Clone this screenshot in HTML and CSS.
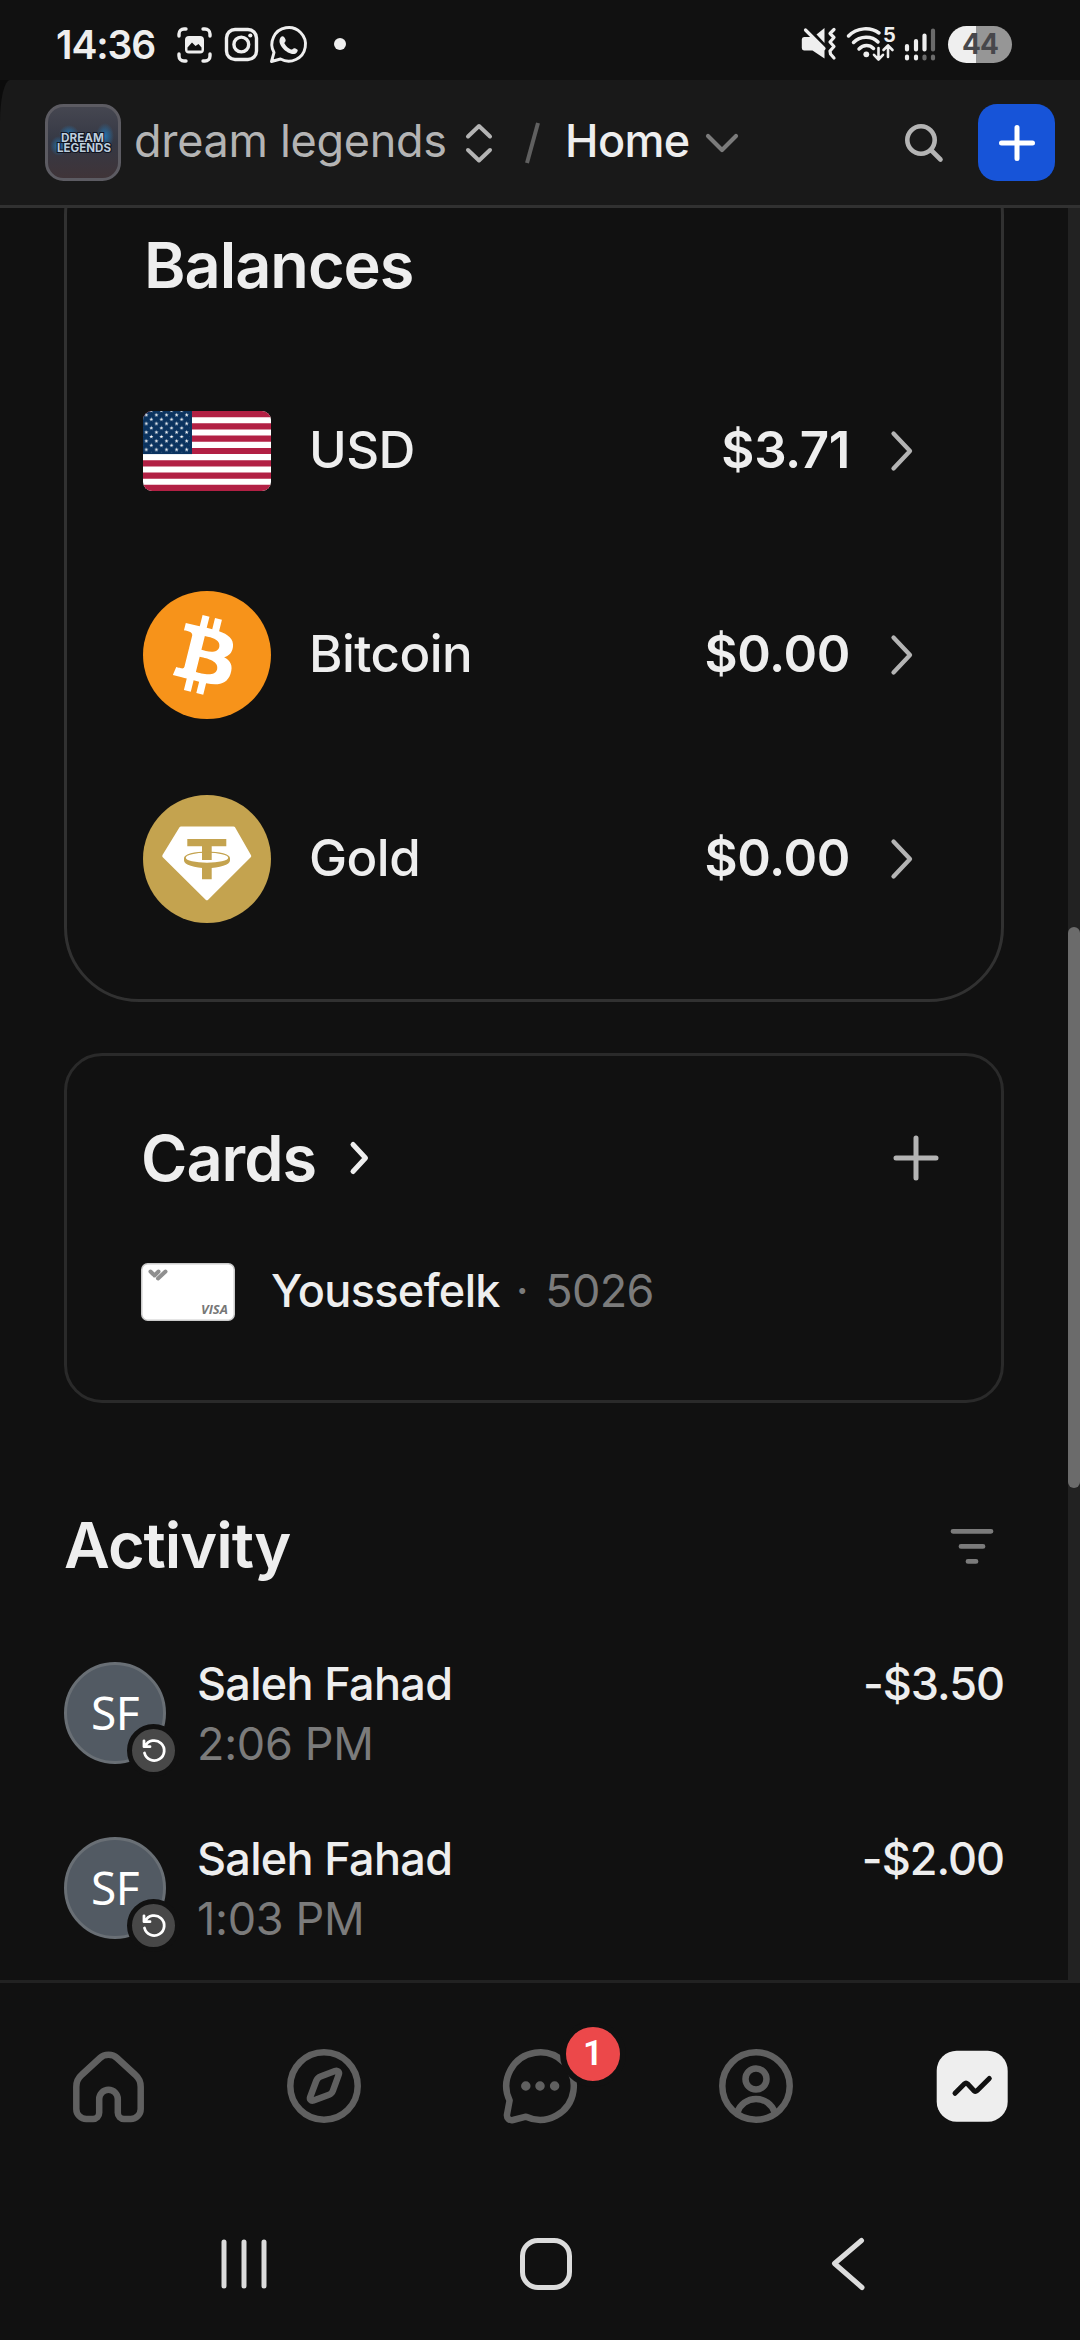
FILE: index.html
```html
<!DOCTYPE html>
<html lang="en">
<head>
<meta charset="utf-8">
<title>Home</title>
<link rel="stylesheet" href="styles.css">
</head>
<body>
<div class="phone">
  <div class="statusbar">
    <span class="clock">14:36</span>
    <svg class="notifs" width="180" height="44" viewBox="174 22 180 44" fill="none" stroke="#efefef" stroke-width="3.4" stroke-linecap="round">
      <path d="M179 36V34A5 5 0 0 1 184 29H186M203 29H205A5 5 0 0 1 210 34V36M210 54V56A5 5 0 0 1 205 61H203M186 61H184A5 5 0 0 1 179 56V54"/>
      <rect x="185" y="36" width="19" height="17.500" rx="4" fill="#efefef" stroke="none"/>
      <path d="M187.500 50.500V47.500L192 42.500L195.500 46L198.500 44L201.500 47.500V50.500Z" fill="#111" stroke="none"/>
      <rect x="226.500" y="29.500" width="30" height="30" rx="8.500"/>
      <circle cx="241.300" cy="44.500" r="7.400"/>
      <circle cx="250.300" cy="35.500" r="2.100" fill="#efefef" stroke="none"/>
      <path d="M274 52.500A16.800 16.800 0 1 1 280.500 59L271.500 61.500Z" stroke-width="2.900" stroke-linejoin="round"/>
      <path d="M280.500 37.500C282.500 35 284.500 36.500 285.500 39.500C286.300 41.500 284 42.500 284.500 43.500C286 46.500 288.500 48.500 291 49.500C292.500 50 293 47.500 295 48.300C298 49.500 298.500 50.500 296.800 52.500C294 56 287 53 283 48.500C279.500 44.500 278.500 40.500 280.500 37.500Z" fill="#efefef" stroke="none"/>
      <circle cx="340" cy="44" r="6" fill="#efefef" stroke="none"/>
    </svg>
    <svg class="sysicons" width="140" height="40" viewBox="800 24 140 40" fill="none" stroke="#efefef" stroke-linecap="round" stroke-linejoin="round">
      <path d="M804 37H812L824.500 49V58.500L812.500 50.500H804A2.500 2.500 0 0 1 801.800 48V39.500A2.500 2.500 0 0 1 804 37Z" fill="#efefef" stroke="none"/>
      <path d="M824.500 28V43L816.500 34.500Z" fill="#efefef" stroke="none"/>
      <path d="M805.500 30L824 48.500" stroke-width="3.200"/>
      <path d="M834 29.500L830 33.500L834 37.500L830 42L834 46.500L830 51L830.500 54L834 58" stroke-width="3.200"/>
      <path d="M848.500 36C857 27 871 27 879 33M853.500 42.500C860 35.500 872 35.500 878 42M859 49C863.500 44.500 869.500 44.500 873.500 48.500" stroke-width="3.500"/>
      <circle cx="866.300" cy="54.300" r="2.900" fill="#efefef" stroke="none"/>
      <path d="M878.500 48V59M874 54.800L878.500 59.500L883 54.800M888 57V46M883.500 50L888 45.300L892.500 50" stroke-width="2.600"/>
      <text class="wifi-gen" x="883" y="41.500">5</text>
      <path d="M907 46V49.500M916 41V49.500M924.500 35.500V49.500M907 56.500V58.500M916 56.500V58.500" stroke-width="4.200"/>
      <path d="M933 30.500V49.500M924.500 56.500V58.500M933 56.500V58.500" stroke="#6b6b6b" stroke-width="4.200"/>
    </svg>
    <span class="battery">44</span>
  </div>

  <div class="appbar-wrap">
    <header class="appbar">
      <svg class="brand-logo" width="76" height="77" viewBox="0 0 76 77">
        <defs>
          <linearGradient id="lg" x1="0" y1="0" x2="0" y2="1"><stop offset="0" stop-color="#464751"/><stop offset=".5" stop-color="#353844"/><stop offset="1" stop-color="#403438"/></linearGradient>
          <radialGradient id="glow"><stop offset="0" stop-color="#1f7fc4" stop-opacity=".8"/><stop offset="1" stop-color="#1f7fc4" stop-opacity="0"/></radialGradient>
        </defs>
        <rect x="1.500" y="1.500" width="73" height="74" rx="17" fill="url(#lg)" stroke="#5c5b62" stroke-width="3"/>
        <ellipse cx="60" cy="32" rx="9" ry="13" fill="url(#glow)"/>
        <ellipse cx="24" cy="30" rx="10" ry="9" fill="url(#glow)"/>
        <ellipse cx="14" cy="42" rx="9" ry="10" fill="url(#glow)"/>
        <text class="logo-word" x="16" y="38" textLength="43" lengthAdjust="spacingAndGlyphs">DREAM</text>
        <text class="logo-word" x="12" y="47.500" textLength="54" lengthAdjust="spacingAndGlyphs">LEGENDS</text>
      </svg>
      <span class="brand-name">dream legends</span>
      <svg class="updown" width="28" height="42" viewBox="0 0 28 42" fill="none" stroke="#b4b4b4" stroke-width="4" stroke-linecap="round" stroke-linejoin="round"><path d="M3 14.500L14 4L25 14.500M3 28L14 38.500L25 28"/></svg>
      <svg class="slash" width="18" height="44" viewBox="0 0 18 44" stroke="#606060" stroke-width="4"><path d="M3 42L14 2"/></svg>
      <span class="crumb">Home</span>
      <svg class="down" width="36" height="24" viewBox="0 0 36 24" fill="none" stroke="#7b7b7b" stroke-width="4.200" stroke-linecap="round" stroke-linejoin="round"><path d="M4 5L18 19L32 5"/></svg>
      <svg class="search" width="42" height="42" viewBox="0 0 42 42" fill="none" stroke="#b4b4b4" stroke-width="4.600" stroke-linecap="round"><circle cx="18" cy="18" r="13.700"/><path d="M28.500 28.500L37.500 37.500"/></svg>
      <button class="create" aria-label="Create"><svg width="44" height="44" viewBox="0 0 44 44" stroke="#fff" stroke-width="5" stroke-linecap="round"><path d="M22 6.500V37.500M6.500 22H37.500"/></svg></button>
    </header>
  </div>

  <div class="viewport">
    <main class="content">
      <section class="card balances">
        <h2>Balances</h2>
        <div class="balance">
          <svg class="flag" width="128" height="80" viewBox="0 0 128 80">
            <defs>
              <pattern id="stars" x=".8" y="1.900" width="10.100" height="8.670" patternUnits="userSpaceOnUse">
                <path id="s" fill="#fff" d="M2.500 0L3 1.400H4.500L3.300 2.300L3.800 3.800L2.500 2.900L1.200 3.800L1.700 2.300L.5 1.400H2Z"/>
                <use href="#s" x="5.050" y="4.330"/>
              </pattern>
            </defs>
            <rect width="128" height="80" fill="#fff"/>
            <path stroke="#b22044" stroke-width="6.150" d="M0 3.080H128M0 15.380H128M0 27.690H128M0 40H128M0 52.310H128M0 64.620H128M0 76.920H128"/>
            <rect width="49" height="43.080" fill="#0b335f"/>
            <rect width="47" height="41.300" fill="url(#stars)"/>
          </svg>
          <span class="asset">USD</span><span class="amount">$3.71</span>
          <svg class="go" width="48" height="48" viewBox="0 0 48 48"><path d="M15.500 6.500L32 24L15.500 41.500"/></svg>
        </div>
        <div class="balance">
          <svg width="128" height="128" viewBox="0 0 32 32"><circle cx="16" cy="16" r="16" fill="#f7931a"/><path transform="translate(-.7 0)" fill="#fff" d="M23.189 14.020c.314-2.096-1.283-3.223-3.465-3.975l.708-2.840-1.728-.430-.690 2.765c-.454-.114-.920-.220-1.385-.326l.695-2.783L15.596 6l-.708 2.839c-.376-.086-.746-.170-1.104-.260l.002-.009-2.384-.595-.460 1.846s1.283.294 1.256.312c.7.175.826.638.805 1.006l-.806 3.235c.048.012.110.030.180.057l-.183-.045-1.130 4.532c-.086.212-.303.531-.793.410.018.025-1.256-.313-1.256-.313l-.858 1.978 2.250.561c.418.105.828.215 1.231.318l-.715 2.872 1.727.430.708-2.840c.472.127.930.245 1.378.357l-.706 2.828 1.728.430.715-2.866c2.948.558 5.164.333 6.097-2.333.752-2.146-.037-3.385-1.588-4.192 1.130-.260 1.980-1.003 2.207-2.538zm-3.950 5.538c-.533 2.147-4.148.986-5.320.695l.950-3.805c1.172.293 4.929.872 4.370 3.110zm.535-5.569c-.487 1.953-3.495.960-4.470.717l.860-3.450c.975.243 4.118.696 3.610 2.733z"/></svg>
          <span class="asset">Bitcoin</span><span class="amount">$0.00</span>
          <svg class="go" width="48" height="48" viewBox="0 0 48 48"><path d="M15.500 6.500L32 24L15.500 41.500"/></svg>
        </div>
        <div class="balance">
          <svg width="128" height="128" viewBox="0 0 128 128"><circle cx="64" cy="64" r="64" fill="#c4a34f"/><path d="M38 33.200H90.500L106.500 61L63.900 103.500L21 61Z" fill="#fff" stroke="#fff" stroke-width="3.500" stroke-linejoin="round"/><path d="M44.300 44H83.300V51.200H68.700V65H59V51.200H44.300ZM59 71H68.700V84.300H59Z" fill="#c4a34f"/><path fill-rule="evenodd" d="M41 63A23 6.600 0 0 1 87 63V65.500A23 7.600 0 0 1 41 65.500ZM42.800 62.800A21.200 5 0 0 0 85.200 62.800A21.200 5 0 0 0 42.800 62.800Z" fill="#c4a34f"/></svg>
          <span class="asset">Gold</span><span class="amount">$0.00</span>
          <svg class="go" width="48" height="48" viewBox="0 0 48 48"><path d="M15.500 6.500L32 24L15.500 41.500"/></svg>
        </div>
      </section>

      <section class="card cards">
        <div class="cards-head">
          <h2>Cards</h2>
          <svg class="cards-go" width="24" height="40" viewBox="0 0 24 40"><path d="M5 6.500L17.500 20L5 33.500"/></svg>
          <svg class="add" width="48" height="48" viewBox="0 0 48 48"><path d="M24 4V44M4 24H44"/></svg>
        </div>
        <div class="card-row">
          <svg width="94" height="58" viewBox="0 0 94 58"><rect x=".75" y=".75" width="92.500" height="56.500" rx="6" fill="#fff" stroke="#ccc" stroke-width="1.500"/><path d="M9.500 8.500L12 11M17.500 8.500L13.500 12.500M24.500 8.500L17 15.500" stroke="#8f8f8f" stroke-width="4" stroke-linecap="round"/><text class="visa" x="60" y="51" textLength="27" lengthAdjust="spacingAndGlyphs">VISA</text></svg>
          <span class="card-name">Youssefelk</span><span class="card-dot">·</span><span class="card-last4">5026</span>
        </div>
      </section>

      <section class="activity">
        <div class="activity-head">
          <h2>Activity</h2>
          <svg width="48" height="40" viewBox="0 0 48 40" stroke="#7b7b7b" stroke-width="4.800" stroke-linecap="round"><path d="M5 6.300H43M13 21.400H35M20 36.400H28"/></svg>
        </div>
        <div class="entry">
          <div class="avatar">SF<span class="avatar-badge"><svg width="28" height="28" viewBox="0 0 28 28"><path d="M4.500 16A10 10 0 1 0 5.200 9.200M4 3.800V9.700H10"/></svg></span></div>
          <div class="who"><span class="name">Saleh Fahad</span><span class="time">2:06 PM</span></div>
          <span class="delta">-$3.50</span>
        </div>
        <div class="entry">
          <div class="avatar">SF<span class="avatar-badge"><svg width="28" height="28" viewBox="0 0 28 28"><path d="M4.500 16A10 10 0 1 0 5.200 9.200M4 3.800V9.700H10"/></svg></span></div>
          <div class="who"><span class="name">Saleh Fahad</span><span class="time">1:03 PM</span></div>
          <span class="delta">-$2.00</span>
        </div>
      </section>
    </main>
    <div class="scrollbar"><div class="thumb"></div></div>
  </div>

  <nav class="tabs">
    <a class="tab"><svg width="88" height="88" viewBox="0 0 88 88"><path d="M12.300 45C12.300 40 14 36 17.500 33L36 16C40.500 11.800 48.500 11.800 53 16L71.500 33C75 36 76.700 40 76.700 45V67A10 10 0 0 1 66.700 77H60A6.200 6.200 0 0 1 53.800 70.800V57A9.300 9.300 0 0 0 35.200 57V70.800A6.200 6.200 0 0 1 29 77H22.300A10 10 0 0 1 12.300 67Z"/></svg></a>
    <a class="tab"><svg width="88" height="88" viewBox="-44 -44 88 88"><circle r="33.700"/><path d="M-3.500 -9.500L11 -15C13.500 -16 15.700 -14 14.800 -11.500L9 4.500C8.300 6.500 7 8 5 8.700L-10.500 14.500C-13 15.400 -14.700 13.300 -13.800 11L-7.800 -5C-7 -7.200 -5.700 -8.700 -3.500 -9.500Z"/></svg></a>
    <a class="tab"><span class="chat"><svg width="88" height="88" viewBox="-44 -44 88 88"><path d="M-30.400 14.500L-33 28.500C-33.600 32.500 -30.500 34.700 -27 34L-14 30.700A33.700 33.700 0 1 0 -30.400 14.500Z"/><path class="dots" d="M-14.200 0H-14.190M0 0H.01M14.600 0H14.610"/></svg><span class="badge">1</span></span></a>
    <a class="tab"><svg width="88" height="88" viewBox="-44 -44 88 88"><circle r="33.700"/><circle cy="-7" r="10.500"/><path d="M-18.700 26.500A19.700 19.700 0 0 1 18.700 26.500"/></svg></a>
    <a class="tab"><svg width="88" height="88" viewBox="-44 -44 88 88"><rect class="tile" x="-35.300" y="-35.300" width="71" height="71" rx="20"/><path class="trend" d="M-17 7.300L-7.500 -2.200Q-6 -3.700 -4.500 -2.200L2 4.800Q3.500 6 5 4.700L17.300 -7.500"/></svg></a>
  </nav>

  <div class="sysnav">
    <svg width="60" height="60" viewBox="-30 -30 60 60"><path d="M-20 -22V22M0 -22V22M20 -22V22"/></svg>
    <svg width="60" height="60" viewBox="-30 -30 60 60"><rect x="-23.500" y="-23.500" width="47" height="47" rx="15.500"/></svg>
    <svg width="60" height="60" viewBox="-30 -30 60 60"><path d="M13.500 -23.500L-13.500 -.5L14 23.500"/></svg>
  </div>
</div>
</body>
</html>
```
FILE: styles.css
```css
* { box-sizing: border-box; }
body {
  margin: 0;
  background: #111;
  color: #eee;
  font-family: Inter, "Liberation Sans", sans-serif;
}
svg { display: block; flex: none; }
.phone {
  width: 1080px;
  height: 2340px;
  display: flex;
  flex-direction: column;
  overflow: hidden;
  background: #111;
}

/* Android status bar */
.statusbar {
  height: 80px;
  flex: none;
  display: flex;
  align-items: center;
  padding: 8px 68px 0 56px;
}
.clock {
  width: 118px;
  font-size: 39px;
  font-weight: 600;
  letter-spacing: -1.1px;
  white-space: nowrap;
}
.sysicons { margin-left: auto; }
.wifi-gen { font: 700 20px Inter, sans-serif; fill: #efefef; stroke: none; }
.battery {
  width: 64px;
  height: 37px;
  margin-left: 8px;
  border-radius: 19px;
  background: linear-gradient(90deg, #efefef 43%, #969696 43%);
  color: #47474b;
  font-size: 28px;
  font-weight: 700;
  line-height: 36px;
  text-align: center;
  letter-spacing: -1px;
}

/* App bar */
.appbar-wrap { flex: none; background: #0b0b0b; }
.appbar {
  height: 128px;
  display: flex;
  align-items: center;
  padding: 0 25px 0 45px;
  background: #191919;
  border-bottom: 3px solid #313131;
  border-top-left-radius: 10px 42px;
}
.logo-word {
  font: 700 11.500px Inter, sans-serif;
  fill: #bccddd;
  stroke: #10131f;
  stroke-width: 2px;
  paint-order: stroke;
}
.brand-name, .crumb { padding-bottom: 3px; font-size: 45px; font-weight: 500; line-height: 60px; white-space: nowrap; }
.brand-name { width: 331px; margin-left: 13px; color: #b4b4b4; font-weight: 400; letter-spacing: -.3px; }
.slash { margin-left: 31px; }
.crumb { margin-left: 23px; width: 139px; letter-spacing: -.6px; }
.search { margin-left: auto; }
.create {
  width: 77px;
  height: 77px;
  margin-left: 33px;
  padding: 0;
  border: 0;
  border-radius: 19px;
  background: #1754d8;
  display: flex;
  align-items: center;
  justify-content: center;
}

/* Scrolling area */
.viewport { height: 1772px; flex: none; display: flex; overflow: hidden; }
.content { width: 1068px; height: 1772px; padding: 0 64px; overflow: hidden; }
.scrollbar { width: 12px; height: 1775px; padding-top: 719px; background: #222; }
.thumb { height: 561px; border-radius: 6px; background: #6b6b6b; }
h2 { margin: 0; font-size: 63px; font-weight: 600; line-height: 76px; letter-spacing: -1px; }
.card { border: 3px solid #313131; }

.balances { height: 862px; margin-top: -68px; padding: 84px 75px 0 76px; border-radius: 75px; }
.balances h2 { margin: 0 0 46px 1px; }
.balance { height: 204px; display: flex; align-items: center; }
.flag { border-radius: 9px; }
.asset { margin-left: 38px; padding-bottom: 3px; font-size: 51px; font-weight: 500; letter-spacing: -.55px; }
.amount { margin-left: auto; margin-right: 28px; padding-bottom: 3px; font-size: 51px; font-weight: 600; letter-spacing: -.4px; }
.go path { fill: none; stroke: #b4b4b4; stroke-width: 4.300px; stroke-linecap: round; stroke-linejoin: round; }

.cards { height: 350px; margin-top: 51px; padding: 60px 61px 0 74px; border-color: #2a2a2a; border-radius: 38px; }
.cards-head { height: 84px; display: flex; align-items: center; }
.cards-go { margin-left: 32px; }
.cards-go path { fill: none; stroke: #eee; stroke-width: 5px; stroke-linecap: round; stroke-linejoin: round; }
.add { margin-left: auto; }
.add path { stroke: #b4b4b4; stroke-width: 5px; stroke-linecap: round; }
.card-row { height: 58px; margin-top: 63px; display: flex; align-items: center; font-size: 45px; letter-spacing: -.65px; }
.card-row span { padding-bottom: 3px; }
.card-name { margin-left: 36px; font-weight: 500; }
.card-dot { margin: 0 17px 0 16px; color: #7b7b7b; }
.card-last4 { color: #7b7b7b; }
.visa { font: italic 700 13px "Open Sans", sans-serif; fill: #777; letter-spacing: 0; }

.activity { margin-top: 100px; }
.activity-head { height: 84px; margin-bottom: 66px; padding-right: 8px; display: flex; align-items: center; justify-content: space-between; }
.entry { height: 120px; margin-bottom: 55px; display: flex; align-items: center; font-size: 45px; line-height: 60px; }
.avatar {
  position: relative;
  width: 102px;
  height: 102px;
  flex: none;
  border: 3px solid #696f75;
  border-radius: 50%;
  background: #525a63;
  color: #fff;
  font-family: "Noto Sans", sans-serif;
  font-size: 46px;
  line-height: 95px;
  text-align: center;
  letter-spacing: -.5px;
}
.avatar-badge {
  position: absolute;
  left: 60px;
  top: 59px;
  width: 53px;
  height: 53px;
  border: 5px solid #111;
  border-radius: 50%;
  background: #484848;
  display: flex;
  align-items: center;
  justify-content: center;
}
.avatar-badge path { fill: none; stroke: #fff; stroke-width: 2.800px; stroke-linecap: round; stroke-linejoin: round; }
.who { margin-left: 31px; padding-top: 2px; display: flex; flex-direction: column; }
.name { font-weight: 500; letter-spacing: -.7px; }
.time { color: #7b7b7b; letter-spacing: -.3px; }
.delta { margin-left: auto; padding-top: 1px; align-self: flex-start; font-weight: 500; letter-spacing: -1px; }

/* Tab bar */
.tabs { height: 210px; flex: none; display: grid; grid-template-columns: repeat(5, 1fr); border-top: 3px solid #222; }
.tab { height: 205px; display: flex; align-items: center; justify-content: center; }
.tab svg { fill: none; stroke: #606060; stroke-width: 6.500px; stroke-linecap: round; stroke-linejoin: round; }
.tab .dots { stroke-width: 9.500px; }
.tab .tile { fill: #eee; stroke: none; }
.tab .trend { stroke: #111; stroke-width: 5px; }
.chat { position: relative; }
.badge {
  position: absolute;
  left: 64px;
  top: -21px;
  width: 66px;
  height: 66px;
  border: 6px solid #111;
  border-radius: 50%;
  background: #ec484a;
  color: #fff;
  font: 600 35px/54px Roboto, sans-serif;
  text-align: center;
}

/* Android navigation */
.sysnav { height: 148px; flex: none; display: flex; justify-content: center; align-items: center; gap: 242px; padding-left: 12px; }
.sysnav svg { fill: none; stroke: #dcdcdc; stroke-width: 5px; stroke-linecap: round; stroke-linejoin: round; }
```
